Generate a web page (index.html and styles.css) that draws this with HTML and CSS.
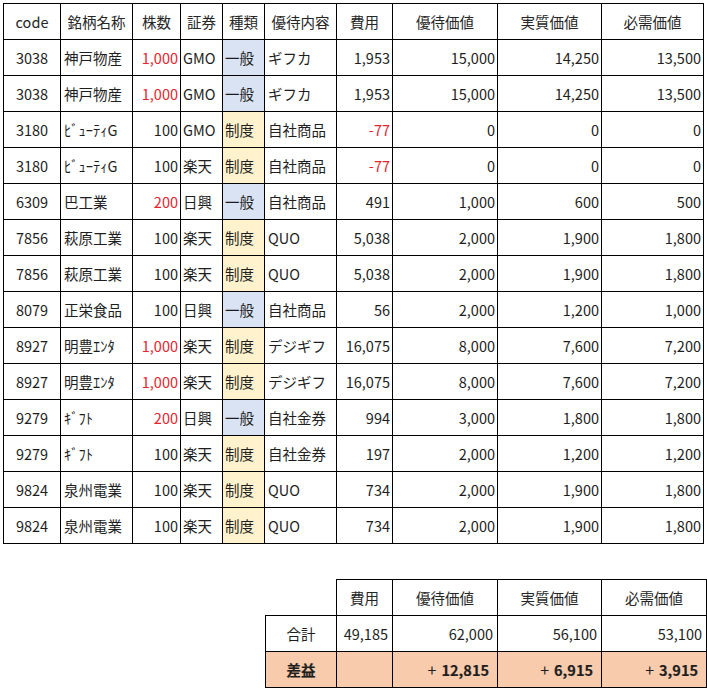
FILE: index.html
```html
<!DOCTYPE html>
<html lang="ja">
<head>
<meta charset="utf-8">
<link rel="stylesheet" href="styles.css">
</head>
<body>
<div class="sheet">
<table class="grid main">
<colgroup>
<col class="w-code"><col class="w-name"><col class="w-qty"><col class="w-broker"><col class="w-kind"><col class="w-benefit"><col class="w-cost"><col class="w-val"><col class="w-val2"><col class="w-val3">
</colgroup>
<thead>
<tr><th>code</th><th>銘柄名称</th><th>株数</th><th>証券</th><th>種類</th><th>優待内容</th><th>費用</th><th>優待価値</th><th>実質価値</th><th>必需価値</th></tr>
</thead>
<tbody>
<tr><td class="c">3038</td><td>神戸物産</td><td class="r red">1,000</td><td class="tight">GMO</td><td class="tight blue">一般</td><td>ギフカ</td><td class="r">1,953</td><td class="r">15,000</td><td class="r">14,250</td><td class="r">13,500</td></tr>
<tr><td class="c">3038</td><td>神戸物産</td><td class="r red">1,000</td><td class="tight">GMO</td><td class="tight blue">一般</td><td>ギフカ</td><td class="r">1,953</td><td class="r">15,000</td><td class="r">14,250</td><td class="r">13,500</td></tr>
<tr><td class="c">3180</td><td>ﾋﾞｭｰﾃｨG</td><td class="r">100</td><td class="tight">GMO</td><td class="tight yellow">制度</td><td>自社商品</td><td class="r red">-77</td><td class="r">0</td><td class="r">0</td><td class="r">0</td></tr>
<tr><td class="c">3180</td><td>ﾋﾞｭｰﾃｨG</td><td class="r">100</td><td class="tight">楽天</td><td class="tight yellow">制度</td><td>自社商品</td><td class="r red">-77</td><td class="r">0</td><td class="r">0</td><td class="r">0</td></tr>
<tr><td class="c">6309</td><td>巴工業</td><td class="r red">200</td><td class="tight">日興</td><td class="tight blue">一般</td><td>自社商品</td><td class="r">491</td><td class="r">1,000</td><td class="r">600</td><td class="r">500</td></tr>
<tr><td class="c">7856</td><td>萩原工業</td><td class="r">100</td><td class="tight">楽天</td><td class="tight yellow">制度</td><td>QUO</td><td class="r">5,038</td><td class="r">2,000</td><td class="r">1,900</td><td class="r">1,800</td></tr>
<tr><td class="c">7856</td><td>萩原工業</td><td class="r">100</td><td class="tight">楽天</td><td class="tight yellow">制度</td><td>QUO</td><td class="r">5,038</td><td class="r">2,000</td><td class="r">1,900</td><td class="r">1,800</td></tr>
<tr><td class="c">8079</td><td>正栄食品</td><td class="r">100</td><td class="tight">日興</td><td class="tight blue">一般</td><td>自社商品</td><td class="r">56</td><td class="r">2,000</td><td class="r">1,200</td><td class="r">1,000</td></tr>
<tr><td class="c">8927</td><td>明豊ｴﾝﾀ</td><td class="r red">1,000</td><td class="tight">楽天</td><td class="tight yellow">制度</td><td>デジギフ</td><td class="r">16,075</td><td class="r">8,000</td><td class="r">7,600</td><td class="r">7,200</td></tr>
<tr><td class="c">8927</td><td>明豊ｴﾝﾀ</td><td class="r red">1,000</td><td class="tight">楽天</td><td class="tight yellow">制度</td><td>デジギフ</td><td class="r">16,075</td><td class="r">8,000</td><td class="r">7,600</td><td class="r">7,200</td></tr>
<tr><td class="c">9279</td><td>ｷﾞﾌﾄ</td><td class="r red">200</td><td class="tight">日興</td><td class="tight blue">一般</td><td>自社金券</td><td class="r">994</td><td class="r">3,000</td><td class="r">1,800</td><td class="r">1,800</td></tr>
<tr><td class="c">9279</td><td>ｷﾞﾌﾄ</td><td class="r">100</td><td class="tight">楽天</td><td class="tight yellow">制度</td><td>自社金券</td><td class="r">197</td><td class="r">2,000</td><td class="r">1,200</td><td class="r">1,200</td></tr>
<tr><td class="c">9824</td><td>泉州電業</td><td class="r">100</td><td class="tight">楽天</td><td class="tight yellow">制度</td><td>QUO</td><td class="r">734</td><td class="r">2,000</td><td class="r">1,900</td><td class="r">1,800</td></tr>
<tr><td class="c">9824</td><td>泉州電業</td><td class="r">100</td><td class="tight">楽天</td><td class="tight yellow">制度</td><td>QUO</td><td class="r">734</td><td class="r">2,000</td><td class="r">1,900</td><td class="r">1,800</td></tr>
</tbody>
</table>

<table class="grid summary">
<colgroup>
<col class="s-label"><col class="w-cost"><col class="w-val"><col class="w-val2"><col class="s-last">
</colgroup>
<tr><th class="blank"></th><th>費用</th><th>優待価値</th><th>実質価値</th><th>必需価値</th></tr>
<tr><td class="c">合計</td><td class="r">49,185</td><td class="r">62,000</td><td class="r">56,100</td><td class="r">53,100</td></tr>
<tr class="profit"><td class="c b">差益</td><td></td><td class="r b pr"><span class="plus">+</span>12,815</td><td class="r b pr"><span class="plus">+</span>6,915</td><td class="r b pr"><span class="plus">+</span>3,915</td></tr>
</table>
</div>
</body>
</html>
```
FILE: styles.css
```css
html, body {
  margin: 0;
  padding: 0;
  background: #ffffff;
}
.sheet {
  padding: 3px 0 0 3px;
  font-family: "Noto Sans CJK JP", "Noto Sans", sans-serif;
  font-size: 14.5px;
  color: #1e1e1e;
}
.grid {
  border-collapse: collapse;
  table-layout: fixed;
}
.grid th, .grid td {
  border: 1px solid #000;
  height: 35px;
  padding: 0 3px;
  font-weight: normal;
  white-space: nowrap;
  overflow: hidden;
  text-align: left;
  line-height: 20px;
}
.grid th {
  text-align: center;
  color: #262626;
}
.main { width: 701px; }
.w-code { width: 57px; }
.w-name { width: 72px; }
.w-qty { width: 48px; }
.w-broker { width: 42px; }
.w-kind { width: 42px; }
.w-benefit { width: 72px; }
.w-cost { width: 56px; }
.w-val { width: 105px; }
.w-val2 { width: 104px; }
.w-val3 { width: 102px; }
.c { text-align: center !important; }
.r { text-align: right !important; padding-right: 2px !important; }
.tight { padding-left: 2px !important; padding-right: 0 !important; }
.red { color: #e8232e; }
.blue { background: #dae3f3; }
.yellow { background: #fff2cc; }
.summary {
  margin: 35px 0 0 262px;
  width: 441px;
}
.s-label { width: 71px; }
.s-last { width: 105px; }
.summary th.blank {
  border-top: none;
  border-left: none;
  background: #fff;
}
.summary td.r { padding-right: 4px !important; }
.profit td { background: #f8cbad; }
.summary td.pr { padding-right: 8px !important; }
.grid td.b {
  font-weight: 700;
  -webkit-text-stroke: 0.2px #1e1e1e;
}
.plus {
  font-weight: normal;
  -webkit-text-stroke: 0;
  margin-right: 5px;
  font-size: 16px;
}
```
